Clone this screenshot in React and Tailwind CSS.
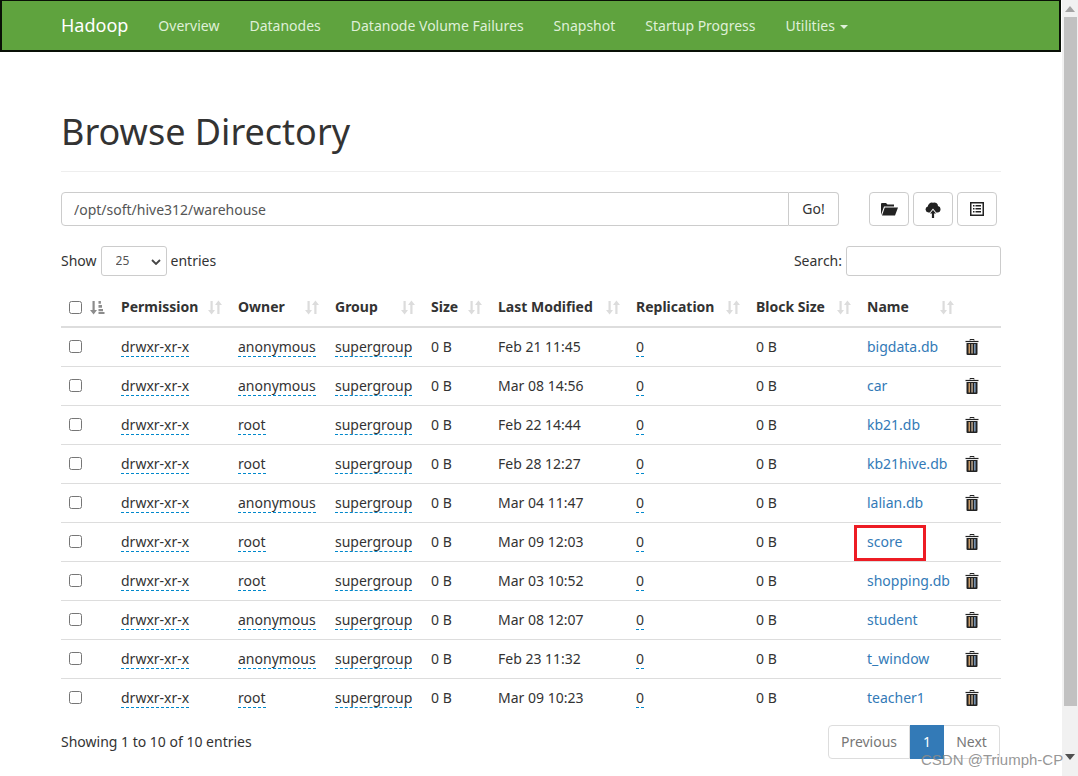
import React from "react";

const font = "font-['Noto_Sans','Open_Sans',sans-serif]";

const rows = [
  ["anonymous", "Feb 21 11:45", "bigdata.db"],
  ["anonymous", "Mar 08 14:56", "car"],
  ["root", "Feb 22 14:44", "kb21.db"],
  ["root", "Feb 28 12:27", "kb21hive.db"],
  ["anonymous", "Mar 04 11:47", "lalian.db"],
  ["root", "Mar 09 12:03", "score"],
  ["root", "Mar 03 10:52", "shopping.db"],
  ["anonymous", "Mar 08 12:07", "student"],
  ["anonymous", "Feb 23 11:32", "t_window"],
  ["root", "Mar 09 10:23", "teacher1"],
];

const nav = ["Overview", "Datanodes", "Datanode Volume Failures", "Snapshot", "Startup Progress"];

function SortIcon() {
  return (
    <svg width="14" height="15" viewBox="0 0 14 15" className="shrink-0 text-[#dcdcdc]" fill="currentColor">
      <path d="M2.5 1h2.2v9H7l-3.4 4.5L0 10h2.5z" />
      <path d="M9.3 14h2.2V5H14L10.4.5 7 5h2.3z" />
    </svg>
  );
}

function SortActive() {
  return (
    <svg width="15" height="15" viewBox="0 0 15 15" className="shrink-0 text-[#8c8c8c]" fill="currentColor">
      <path d="M2.5 1h2.2v9H7l-3.4 4.5L0 10h2.5z" />
      <path d="M8.5 1h2.4v2.8H8.500zM8.500 5h3.500v2.800H8.500zM8.500 9h4.500v2.200H8.500zM8.500 12h6v2H8.500z" />
    </svg>
  );
}

function Trash() {
  return (
    <svg width="14" height="16" viewBox="0 0 14 16" className="block">
      <path d="M5 1.500V.5h4v1" fill="none" stroke="#222" />
      <path d="M.5 2.500h13" stroke="#222" strokeWidth="1.200" />
      <path d="M1.500 4h11v11a1 1 0 0 1-1 1h-9a1 1 0 0 1-1-1z" fill="#222" />
      <path d="M3.500 5h1.500v9.500H3.500z" fill="#c89a66" />
      <path d="M6.300 5h1.500v9.500H6.300z" fill="#b9a58f" />
      <path d="M9.100 5h1.500v9.500H9.100z" fill="#7f9dbd" />
    </svg>
  );
}

function Folder() {
  return (
    <svg width="18" height="14" viewBox="0 0 18 14" fill="#222">
      <path d="M1 13V2q0-1 1-1h4l1.500 1.500H14v2H4z" />
      <path d="M4.800 5.500H18L15 13.500H2z" />
    </svg>
  );
}

function Cloud() {
  return (
    <svg width="16" height="17" viewBox="0 0 16 17" fill="#222">
      <path d="M3.500 11.500A3 3 0 0 1 2.800 5.600 4 4 0 0 1 8 1.800a3.500 3.500 0 0 1 5 3.200 3.300 3.300 0 0 1-.5 6.500h-1.300L8 7.500l-3.200 4z" />
      <path d="M8 9l3 3.500H9.100V17H6.900v-4.500H5z" />
    </svg>
  );
}

function ListAlt() {
  return (
    <svg width="14" height="14" viewBox="0 0 14 14" fill="#222">
      <path d="M0 0h14v14H0zM1.500 1.500v11h11v-11z" fillRule="evenodd" />
      <path d="M3 3h1.500v1.500H3zM5.500 3H11v1.500H5.500zM3 6h1.500v1.500H3zM5.500 6H11v1.500H5.500zM3 9h1.500v1.500H3zM5.500 9H11v1.500H5.500z" />
    </svg>
  );
}

function Dashed({ children }) {
  return <span className="border-b border-dashed border-[#0088cc]">{children}</span>;
}

function Head({ children, width }) {
  return (
    <th className={`${width} px-2 pt-[9px] pb-[9px] border-b-2 border-[#dddddd] text-left font-bold`}>
      <div className="flex items-center justify-between">
        <span>{children}</span>
        <SortIcon />
      </div>
    </th>
  );
}

export default function App() {
  return (
    <div className={`${font} flex h-[776px] w-[1078px] overflow-hidden bg-white text-sm text-[#333333] relative`}>
      <div className="w-[1062px] shrink-0">
        <nav className="mr-px flex h-[52px] items-center border-[2px] border-t-[1.500px] border-black/90 bg-[#5fa33e] pl-[44px]">
          <span className="pl-[15px] pr-[15px] text-[18px] text-white">Hadoop</span>
          <ul className="flex">
            {nav.map((n) => (
              <li key={n} className="px-[15px] text-[#dff0d8]">{n}</li>
            ))}
            <li className="flex items-center gap-[5px] px-[15px] text-[#dff0d8]">
              Utilities
              <span className="mt-[2px] h-0 w-0 border-x-4 border-t-4 border-x-transparent border-t-[#dff0d8]" />
            </li>
          </ul>
        </nav>

        <main className="ml-[61px] w-[940px]">
          <div className="mt-[60px] mb-[20px] border-b border-[#eeeeee] pb-[19px]">
            <h1 className="text-[36px] leading-[40px] font-normal">Browse Directory</h1>
          </div>

          <div className="flex justify-between pr-[4px]">
            <div className="flex w-[778px]">
              <input
                readOnly
                defaultValue="/opt/soft/hive312/warehouse"
                className="h-[34px] min-w-0 flex-1 rounded-l border border-[#cccccc] px-3 text-[#555555] outline-none"
              />
              <button className="h-[34px] w-[50px] rounded-r border border-l-0 border-[#cccccc]">Go!</button>
            </div>
            <div className="flex gap-[4px]">
              <button className="flex h-[34px] w-[40px] items-center justify-center rounded border border-[#cccccc]"><Folder /></button>
              <button className="flex h-[34px] w-[40px] items-center justify-center rounded border border-[#cccccc]"><Cloud /></button>
              <button className="flex h-[34px] w-[40px] items-center justify-center rounded border border-[#cccccc]"><ListAlt /></button>
            </div>
          </div>

          <div className="mt-[20px] flex items-center justify-between">
            <div className="flex items-center gap-[4px]">
              <span>Show</span>
              <span className="relative">
                <select className="block h-[30px] w-[66px] appearance-none rounded-[3px] border border-[#cccccc] bg-white pl-[14px] text-xs text-[#555555]" defaultValue="25">
                  <option>25</option>
                </select>
                <svg width="10" height="6" viewBox="0 0 10 6" className="absolute right-[6px] top-[13px]" fill="none" stroke="#444" strokeWidth="1.800">
                  <path d="M1 1l4 4 4-4" />
                </svg>
              </span>
              <span>entries</span>
            </div>
            <div className="flex items-center gap-[4px]">
              <span>Search:</span>
              <input className="h-[30px] w-[155px] rounded-[3px] border border-[#cccccc] outline-none" />
            </div>
          </div>

          <table className="mt-[12px] w-[940px] table-fixed border-collapse">
            <thead>
              <tr>
                <th className="w-[52px] border-b-2 border-[#dddddd] px-2 pb-[9px] pt-[9px] text-left">
                  <div className="flex items-center justify-between">
                    <input type="checkbox" className="m-0 h-[13px] w-[13px]" />
                    <SortActive />
                  </div>
                </th>
                <Head width="w-[117px]">Permission</Head>
                <Head width="w-[97px]">Owner</Head>
                <Head width="w-[96px]">Group</Head>
                <Head width="w-[67px]">Size</Head>
                <Head width="w-[138px]">Last Modified</Head>
                <Head width="w-[120px]">Replication</Head>
                <Head width="w-[111px]">Block Size</Head>
                <Head width="w-[103px]">Name</Head>
                <th className="w-[39px] border-b-2 border-[#dddddd]" />
              </tr>
            </thead>
            <tbody>
              {rows.map(([owner, date, name]) => (
                <tr key={name} className="h-[39px] border-b border-[#dddddd] last:border-b-0">
                  <td className="px-2"><input type="checkbox" className="m-0 block h-[13px] w-[13px]" /></td>
                  <td className="px-2"><Dashed>drwxr-xr-x</Dashed></td>
                  <td className="px-2"><Dashed>{owner}</Dashed></td>
                  <td className="px-2"><Dashed>supergroup</Dashed></td>
                  <td className="px-2">0 B</td>
                  <td className="px-2">{date}</td>
                  <td className="px-2"><Dashed>0</Dashed></td>
                  <td className="px-2">0 B</td>
                  <td className="relative px-2 text-[#337ab7]">
                    {name}
                    {name === "score" && (
                      <span className="absolute left-[-5px] top-[2px] h-[36px] w-[72px] border-[3px] border-[#ed1c24]" />
                    )}
                  </td>
                  <td className="pl-[3px]"><Trash /></td>
                </tr>
              ))}
            </tbody>
          </table>

          <div className="mt-[8px] flex items-center justify-between">
            <span>Showing 1 to 10 of 10 entries</span>
            <ul className="mr-px flex h-[34px]">
              <li className="flex w-[82px] items-center justify-center rounded-l border border-[#dddddd] text-[#777777]">Previous</li>
              <li className="flex w-[34px] items-center justify-center bg-[#337ab7] text-white">1</li>
              <li className="flex w-[56px] items-center justify-center rounded-r border border-l-0 border-[#dddddd] text-[#777777]">Next</li>
            </ul>
          </div>
        </main>
      </div>

      <aside className="flex w-4 shrink-0 flex-col items-center bg-[#f1f1f1]">
        <svg width="10" height="6" viewBox="0 0 10 6" className="mt-[6px]" fill="#a3a3a3"><path d="M5 0l5 6H0z" /></svg>
        <div className="mt-[5px] h-[689px] w-[13px] bg-[#c1c1c1]" />
        <svg width="10" height="6" viewBox="0 0 10 6" className="mt-[48px]" fill="#505050"><path d="M5 6L0 0h10z" /></svg>
      </aside>

      <span className="absolute left-[921px] top-[749px] font-['Liberation_Sans',sans-serif] text-[15px] text-[#8a8a8a]/90">CSDN @Triumph-CP</span>
    </div>
  );
}
